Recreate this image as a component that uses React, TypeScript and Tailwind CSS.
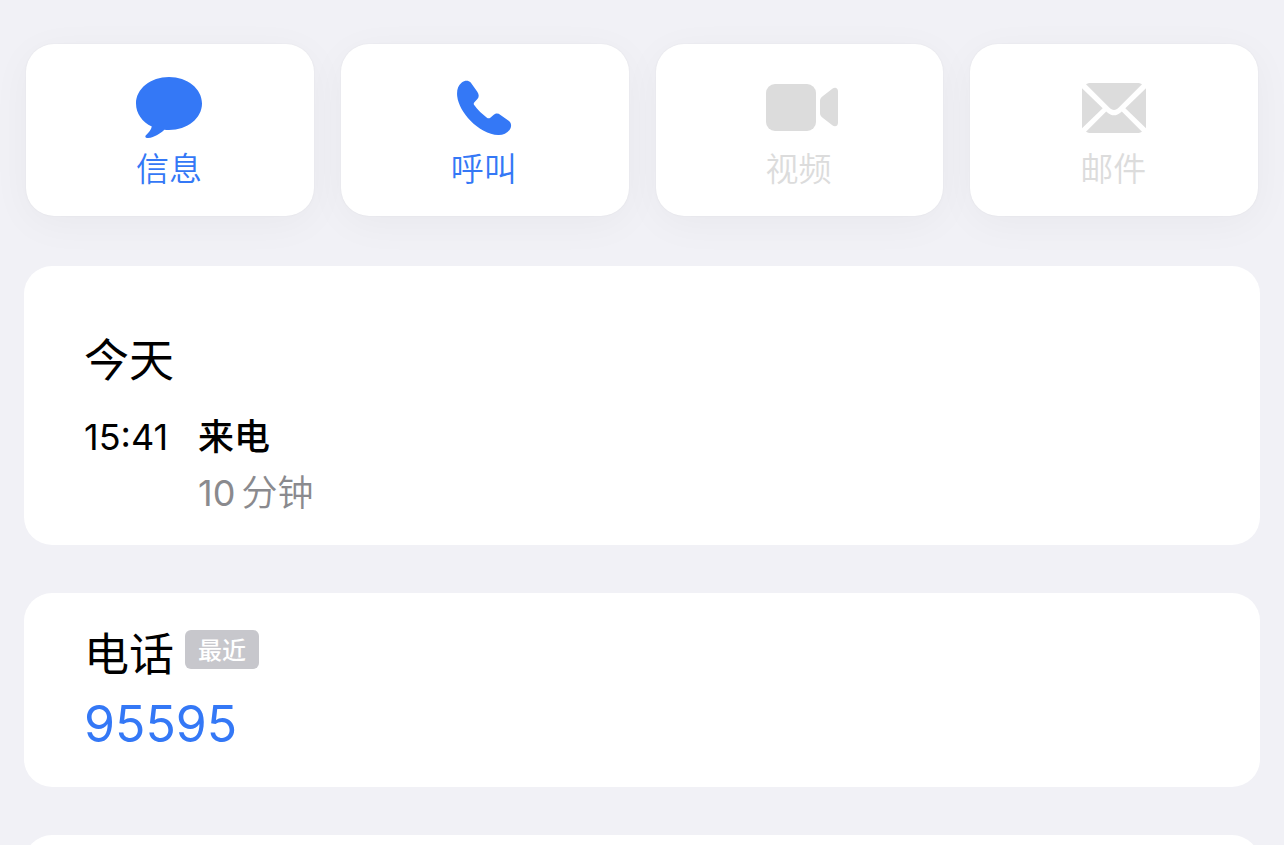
import type { ReactNode } from "react";

type Action = { label: string; icon: ReactNode; disabled?: boolean };

const MessageIcon = () => (
  <svg width="68" height="62" viewBox="0 0 68 62" fill="currentColor" aria-hidden="true">
    <path d="M34 0C15.600 0 1 11.800 1 26.500C1 36.300 7.300 45.300 16.800 49.600C16.300 52.600 13.800 55.700 11.200 58.100C9.300 59.900 10.800 61.300 13.200 61C19.500 60.300 25.500 56.400 29.300 52.700C30.900 52.900 32.400 53 34 53C52.400 53 67 41.200 67 26.500C67 11.800 52.400 0 34 0Z" />
  </svg>
);

const PhoneIcon = () => (
  <svg width="56" height="56" viewBox="0 0 56 56" fill="currentColor" aria-hidden="true">
    <path d="M14.700 2.400C12.300 0.100 8.600 0.300 5.800 2.500C1.700 5.700 0.600 10.600 1.200 16.200C2.200 24.600 7.500 33.500 14.500 40.700C22.300 48.700 32.700 54.600 42.200 55C46.600 55.200 51 53.400 53.700 49.700C55.600 47 55.700 43.300 53 41L44.500 34.900C42 33.100 39.500 33.100 37.200 35.200L34 37.900C33.200 38.500 32.200 38.500 31.200 37.900C26.600 34.600 21.400 29.500 18.200 25C17.500 24 17.600 23.100 18.400 22.200L21.400 18.900C23.300 16.700 23 14.300 21.300 11.700Z" />
  </svg>
);

const VideoIcon = () => (
  <svg width="82" height="50" viewBox="-8 0 82 50" fill="currentColor" aria-hidden="true">
    <rect x="1" y="1" width="50" height="47" rx="9" />
    <path d="M55 18C55 16.300 55.600 15 57 13.800L67.300 5.700C69.900 3.600 73 4.700 73 8.200V39.800C73 43.300 69.900 44.400 67.300 42.300L57 34.200C55.600 33 55 31.700 55 30Z" />
  </svg>
);

const MailIcon = () => (
  <svg width="68" height="52" viewBox="-2 0 68 52" fill="currentColor" aria-hidden="true">
    <path d="M5 2.200C6.300 1.300 8 1 10 1H56C58 1 59.700 1.300 61 2.200L38 25.300C34.500 28.800 31.500 28.800 28 25.300Z" />
    <path d="M1 6.200L21.700 26.200L1 46.200Z" />
    <path d="M65 6.200L44.300 26.200L65 46.200Z" />
    <path d="M5 49.800L25.200 29.400L26 30.200C30.500 34.300 35.500 34.300 40 30.200L40.800 29.400L61 49.800C59.700 50.700 58 51 56 51H10C8 51 6.300 50.700 5 49.800Z" />
  </svg>
);

const actions: Action[] = [
  { label: "信息", icon: <MessageIcon /> },
  { label: "呼叫", icon: <PhoneIcon /> },
  { label: "视频", icon: <VideoIcon />, disabled: true },
  { label: "邮件", icon: <MailIcon />, disabled: true },
];

function ActionButton({ label, icon, disabled }: Action) {
  return (
    <button
      type="button"
      disabled={disabled}
      className="flex flex-col items-center rounded-[28px] bg-white pt-8 pr-0.5 pb-[22px] text-[#3478f6] shadow-[0_0_2px_rgba(0,0,0,0.06),0_8px_40px_rgba(0,0,0,0.04)] disabled:text-[#dcdcdc]"
    >
      <span className="flex h-16 items-center">{icon}</span>
      <span className="mt-1 text-[33px] leading-[50px] font-[350]">{label}</span>
    </button>
  );
}

export default function App() {
  return (
    <main
      lang="zh-CN"
      className="flex h-screen flex-col gap-12 overflow-hidden bg-[#f1f1f6] px-6 pt-11 font-['Inter','Noto_Sans_CJK_SC',sans-serif] text-black"
    >
      <nav aria-label="联系方式" className="grid shrink-0 grid-cols-4 gap-[27px] px-0.5 pb-0.5">
        {actions.map((action) => (
          <ActionButton key={action.label} {...action} />
        ))}
      </nav>

      <section className="shrink-0 rounded-[28px] bg-white px-15 pt-[63px] pb-6">
        <h2 className="text-[45px] leading-[64px]">今天</h2>
        <div className="mt-4 flex gap-[30px] text-4xl leading-[56px]">
          <time>15:41</time>
          <div>
            <p className="font-medium">来电</p>
            <p className="flex gap-1.5 text-[#8a8a8e]">
              <span>10</span> <span className="font-[350]">分钟</span>
            </p>
          </div>
        </div>
      </section>

      <section className="shrink-0 rounded-[28px] bg-white px-15 pt-[30px] pb-[26px]">
        <div className="flex items-start gap-[11px]">
          <h2 className="text-[45px] leading-[64px]">电话</h2>
          <span className="mt-[7px] rounded-md bg-[#c7c7cc] px-[13px] pt-0.5 text-2xl leading-[37px] font-medium text-white">最近</span>
        </div>
        <a href="tel:95595" className="block text-[50px] leading-[74px] text-[#3478f6]">
          95595
        </a>
      </section>

      <section className="min-h-24 shrink-0 rounded-[28px] bg-white" />
    </main>
  );
}
